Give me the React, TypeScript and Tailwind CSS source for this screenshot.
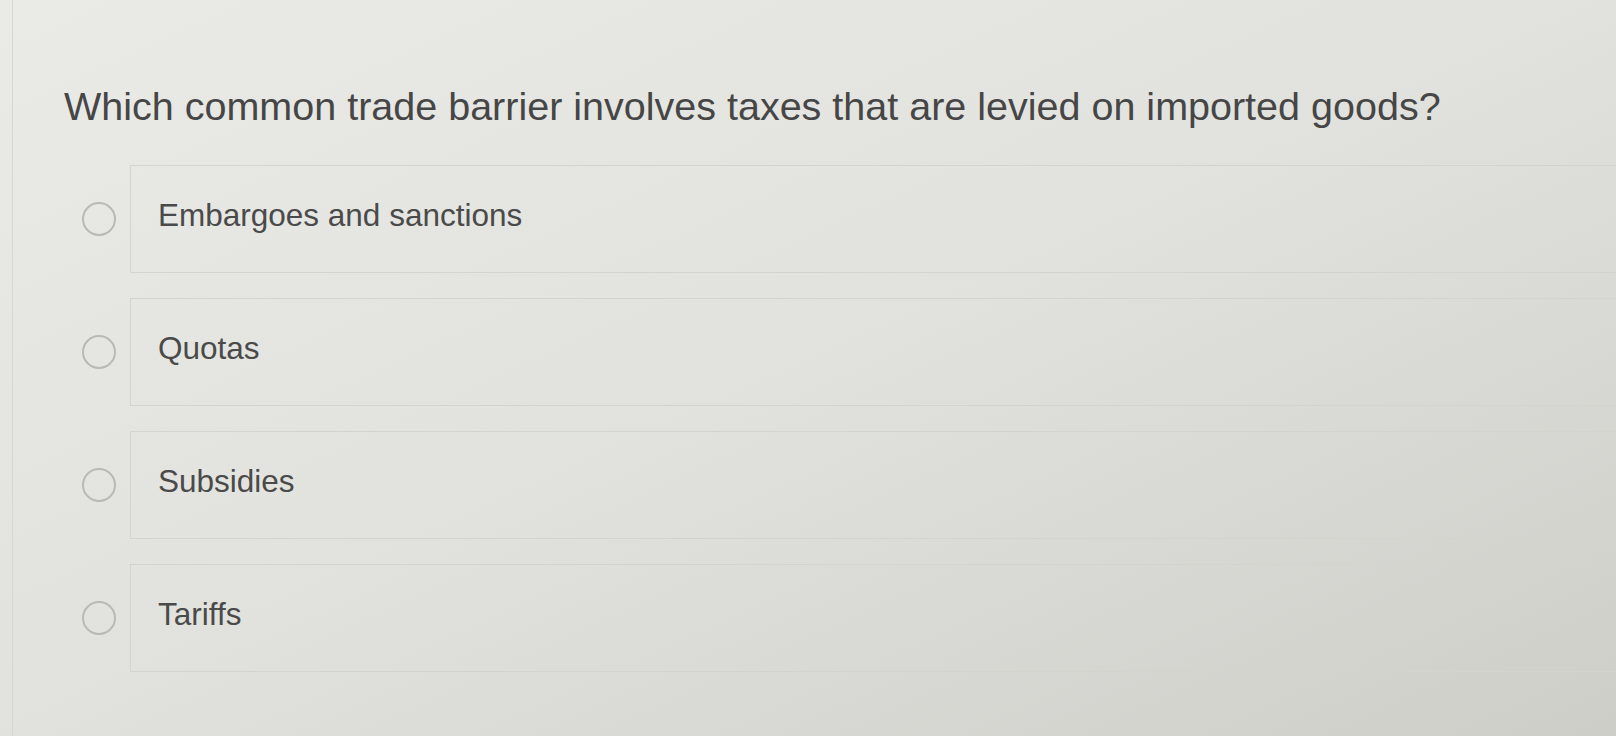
const options = ["Embargoes and sanctions", "Quotas", "Subsidies", "Tariffs"];

function RadioOption({ label }: { label: string }) {
  return (
    <label className="flex items-center cursor-pointer">
      <span className="ml-[67px] w-[38px] flex justify-center">
        <span className="block w-[34px] h-[34px] rounded-full border-2 border-[#b9bab5]" />
      </span>
      <span className="ml-[12px] flex-1 h-[108px] flex items-center pl-[27px] pb-[7px] border-y border-l border-[#d3d4ce]">
        <span className="text-[31.5px] text-[#4a4a4a]">{label}</span>
      </span>
    </label>
  );
}

export default function App() {
  return (
    <div className="w-full h-[736px] overflow-hidden bg-linear-to-br from-[#eaeae7] via-[#e1e2dd] to-[#cdcec8] font-['Liberation_Sans',Arial,sans-serif]">
      <div className="ml-3 h-full border-l border-[#d6d6d2]">
        <h1 className="pl-[51px] pt-[87px] text-[39.5px] leading-[39px] text-[#464646]">
          Which common trade barrier involves taxes that are levied on imported goods?
        </h1>
        <div className="mt-[39px] flex flex-col gap-[25px]">
          {options.map((opt) => (
            <RadioOption key={opt} label={opt} />
          ))}
        </div>
      </div>
    </div>
  );
}
